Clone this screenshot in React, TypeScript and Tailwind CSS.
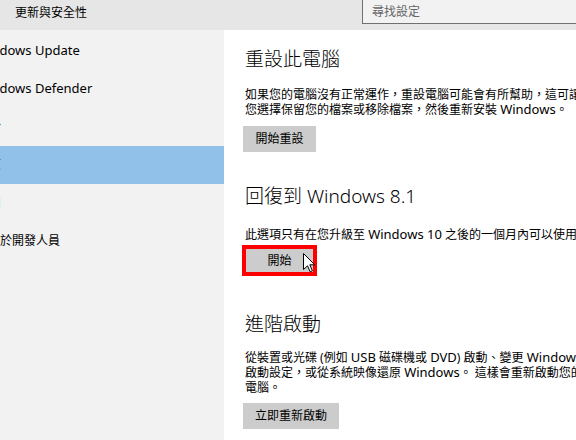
const font = "font-['Noto_Sans','Noto_Sans_CJK_TC',sans-serif]"

const navItems = [
	{ label: 'Windows Update', cls: 'text-[13px] -ml-[24px]' },
	{ label: 'Windows Defender', cls: 'text-[13px] -ml-[24px]' },
	{ label: '備份', cls: 'text-[12px] -ml-[23px]' },
	{ label: '復原', cls: 'text-[12px] -ml-[23px]' },
	{ label: '啟用', cls: 'text-[12px] -ml-[23px]' },
	{ label: '適用於開發人員', cls: 'text-[12px] -ml-[24px]' },
]

// latin words inside the chinese paragraphs render a bit larger
const L = ({ children }: { children: React.ReactNode }) => <span className="text-[13px]">{children}</span>

const Button = ({ children }: { children: React.ReactNode }) => (
	<button className="h-[26px] min-w-[73px] bg-[#cccccc] px-3 text-[12px] leading-none text-black">
		{children}
	</button>
)

const Cursor = () => (
	<svg width="13" height="20" viewBox="0 0 13 20" className="absolute left-[60px] top-[6px]">
		<path d="M0.5 0.5 L0.5 16.5 L4.5 12.8 L7.2 18.8 L9.4 17.8 L6.8 11.8 L11.8 11.8 Z" fill="#fff" stroke="#000" strokeWidth="1" strokeLinejoin="round" />
	</svg>
)

export default function App() {
	return (
		<div className={`${font} flex h-[440px] w-[576px] flex-col overflow-hidden bg-white text-black`}>
			<div className="flex h-[30px] shrink-0 items-start overflow-hidden bg-[#e6e6e6]">
				<span className="mt-[5px] ml-[15px] text-[12px] leading-[15px]">更新與安全性</span>
				<div className="ml-auto flex h-[24px] w-[214px] shrink-0 items-center border-b border-l border-[#707070] bg-[#f2f2f2] pl-[9px]">
					<span className="text-[12px] text-[#666]">尋找設定</span>
				</div>
			</div>

			<div className="flex min-h-0 flex-1">
				<div className="w-[224px] shrink-0 overflow-hidden bg-[#f2f2f2] pt-[2px]">
					{navItems.map((item, i) => (
						<div
							key={item.label}
							className={`flex h-[38px] items-center whitespace-nowrap ${i === 3 ? 'bg-[#91c0e8]' : ''}`}
						>
							<span className={item.cls}>{item.label}</span>
						</div>
					))}
				</div>

				<div className="min-w-0 flex-1 overflow-hidden whitespace-nowrap pl-[21px] pt-[16px]">
					<h2 className="text-[19px] font-light leading-[26px]">重設此電腦</h2>
					<p className="mt-[15px] text-[12px] leading-[15px]">
						如果您的電腦沒有正常運作，重設電腦可能會有所幫助，這可讓您<br />
						您選擇保留您的檔案或移除檔案，然後重新安裝 <L>Windows</L>。
					</p>
					<div className="-ml-[2px] mt-[8px]">
						<Button>開始重設</Button>
					</div>

					<h2 className="mt-[31px] text-[19px] font-light leading-[26px]">回復到 Windows 8.1</h2>
					<p className="mt-[18px] text-[12px] leading-[15px]">
						此選項只有在您升級至 <L>Windows 10</L> 之後的一個月內可以使用。
					</p>
					<div className="relative -ml-[2px] mt-[5px] w-[73px]">
						<Button>開始</Button>
						<div className="pointer-events-none absolute -inset-x-[1px] -inset-y-[2px] border-4 border-[#ff0000]" />
						<Cursor />
					</div>

					<h2 className="mt-[37px] text-[19px] font-light leading-[26px]">進階啟動</h2>
					<p className="mt-[13px] text-[12px] leading-[15px]">
						從裝置或光碟 (例如 <L>USB</L> 磁碟機或 <L>DVD</L>) 啟動、變更 <L>Windows</L><br />
						啟動設定，或從系統映像還原 <L>Windows</L>。 這樣會重新啟動您的<br />
						電腦。
					</p>
					<div className="-ml-[2px] mt-[7px]">
						<Button>立即重新啟動</Button>
					</div>
				</div>
			</div>
		</div>
	)
}
